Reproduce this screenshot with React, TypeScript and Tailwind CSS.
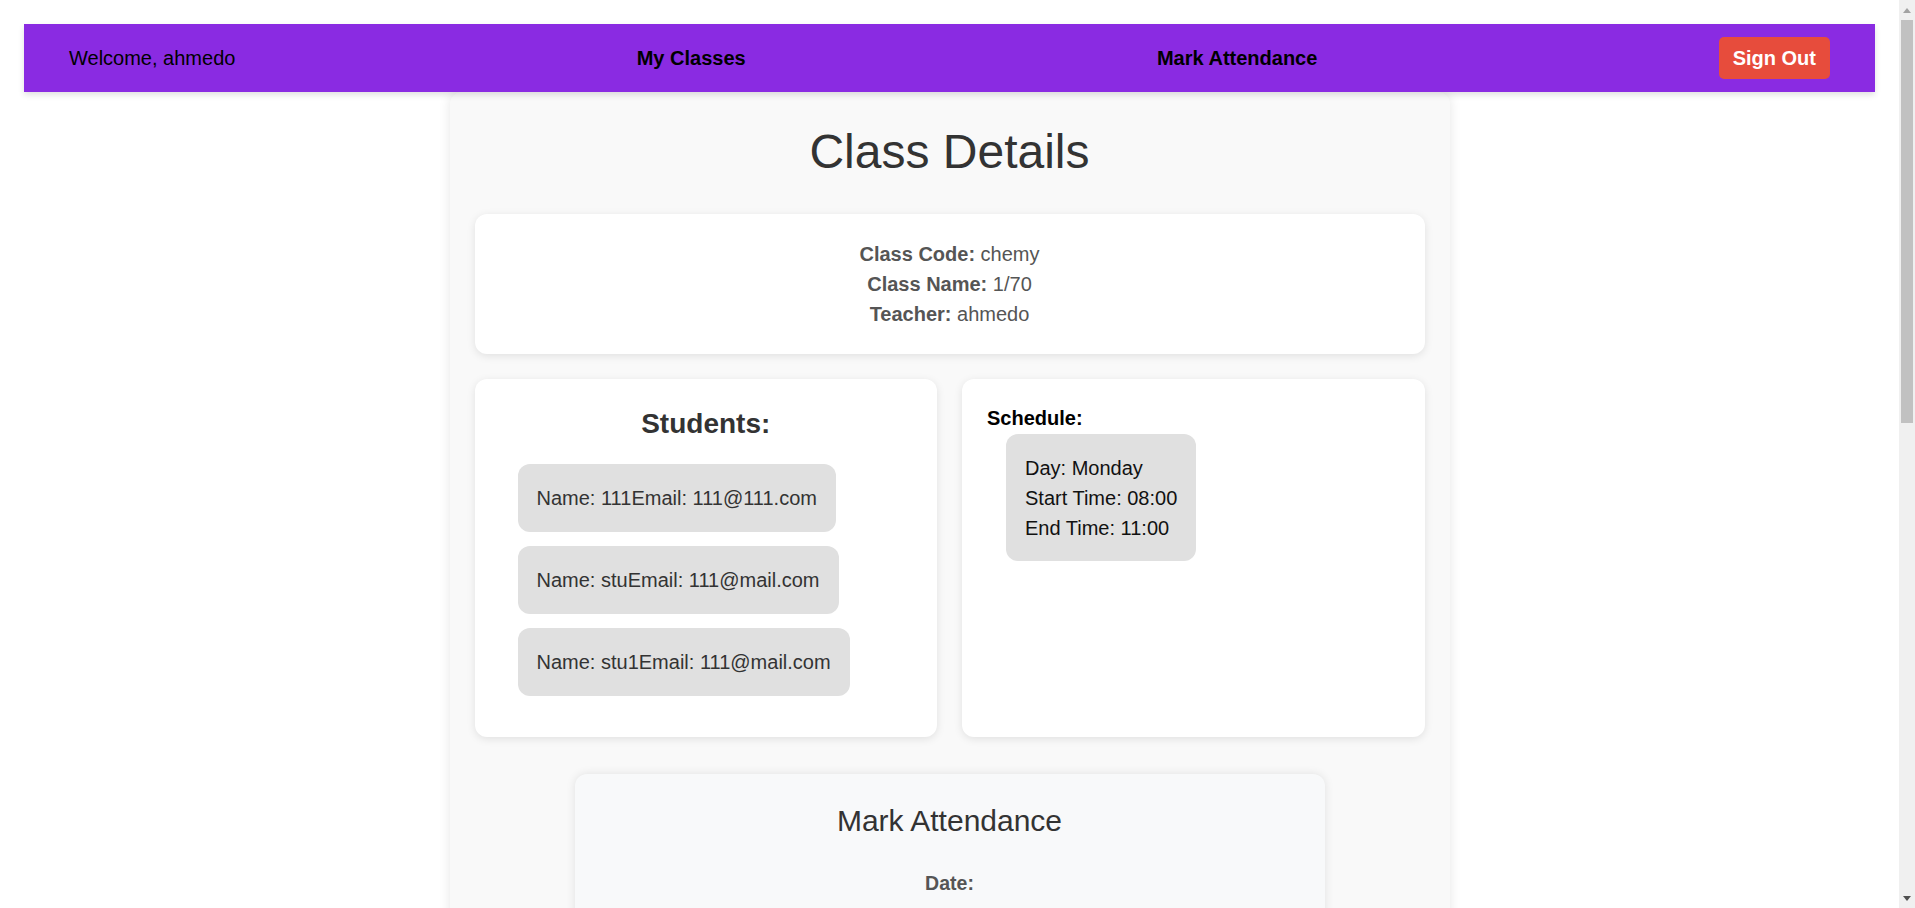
import React from "react";

const students = [
  { name: "111", email: "111@111.com" },
  { name: "stu", email: "111@mail.com" },
  { name: "stu1", email: "111@mail.com" },
];

export default function App() {
  return (
    <div className="flex h-screen overflow-hidden bg-white font-['Liberation_Sans',Arial,sans-serif]">
      <div className="flex-1 overflow-y-auto px-[24px] pt-[24px] pb-[24px] [scrollbar-width:none]">
        {/* Navbar */}
        <nav className="relative z-10 flex h-[68px] items-center justify-between bg-[#8a2be2] px-[45px] text-[20px] text-black shadow-[0_3px_6px_rgba(0,0,0,0.12)]">
          <span>Welcome, ahmedo</span>
          <a href="#" className="mr-[10px] font-bold">My Classes</a>
          <a href="#" className="font-bold">Mark Attendance</a>
          <button className="rounded-[5px] bg-[#e74c3c] px-[14px] py-[10px] text-[20px] leading-[22px] font-bold text-white">
            Sign Out
          </button>
        </nav>

        {/* Class details container */}
        <main className="mx-auto max-w-[1000px] rounded-[12px] bg-[#f9f9f9] px-[25px] pb-[25px] shadow-[0_0_12px_rgba(0,0,0,0.1)]">
          <h1 className="pt-[32px] text-center text-[48px] leading-[55px] text-[#333]">Class Details</h1>

          <div className="mt-[35px] rounded-[12px] bg-white p-[25px] text-center text-[20px] leading-[30px] text-[#555] shadow-[0_2px_8px_rgba(0,0,0,0.1)]">
            <p><span className="font-bold">Class Code:</span> chemy</p>
            <p><span className="font-bold">Class Name:</span> 1/70</p>
            <p><span className="font-bold">Teacher:</span> ahmedo</p>
          </div>

          <div className="mt-[25px] grid grid-cols-2 gap-[25px]">
            {/* Students */}
            <div className="rounded-[12px] bg-white px-[25px] pt-[25px] pb-[41px] shadow-[0_2px_8px_rgba(0,0,0,0.1)]">
              <h3 className="mt-[4px] text-center text-[28px] leading-[32px] font-bold text-[#333]">Students:</h3>
              <ul className="mt-[24px] flex flex-col items-start gap-[14px] pl-[18px]">
                {students.map((s) => (
                  <li
                    key={s.name}
                    className="rounded-[12px] bg-[#e0e0e0] px-[19px] py-[19px] text-[20px] leading-[30px] text-[#333]"
                  >
                    Name: {s.name}Email: {s.email}
                  </li>
                ))}
              </ul>
            </div>

            {/* Schedule */}
            <div className="rounded-[12px] bg-white p-[25px] shadow-[0_2px_8px_rgba(0,0,0,0.1)]">
              <p className="mt-[3px] text-[20px] leading-[23px] font-bold text-black">Schedule:</p>
              <div className="mt-[4px] ml-[19px] w-fit rounded-[12px] bg-[#e0e0e0] px-[19px] py-[18.5px] text-[20px] leading-[30px] text-[#111]">
                <p>Day: Monday</p>
                <p>Start Time: 08:00</p>
                <p>End Time: 11:00</p>
              </div>
            </div>
          </div>

          {/* Mark attendance */}
          <section className="mx-auto mt-[37px] min-h-[1090px] w-[750px] rounded-[12px] bg-[#f8f9fa] px-[25px] pt-[30px] pb-[25px] text-center shadow-[0_0_10px_rgba(0,0,0,0.1)]">
            <h2 className="text-[30px] leading-[33px] text-[#333]">Mark Attendance</h2>
            <label className="mt-[35px] block text-[19.5px] leading-[23px] font-bold text-[#555]">Date:</label>
            <input
              type="date"
              className="mx-auto mt-[18px] block h-[45px] w-[300px] rounded-[6px] border border-[#ccc] bg-white px-[12px] text-[18px]"
            />
            <div className="mt-[30px] flex flex-col gap-[15px]">
              {students.map((s) => (
                <label
                  key={s.name}
                  className="flex items-center justify-between rounded-[10px] bg-white px-[20px] py-[15px] text-[19.5px] text-[#333] shadow-[0_1px_4px_rgba(0,0,0,0.08)]"
                >
                  <span>{s.name}</span>
                  <input type="checkbox" className="h-[20px] w-[20px]" />
                </label>
              ))}
            </div>
            <button className="mt-[30px] rounded-[6px] bg-[#8a2be2] px-[24px] py-[12px] text-[20px] font-bold text-white">
              Submit Attendance
            </button>
          </section>
        </main>
      </div>

      {/* Window scrollbar */}
      <aside className="flex w-[16px] shrink-0 flex-col bg-[#f0f0f0]">
        <div className="flex h-[17px] items-center justify-center pt-[3px]">
          <div className="h-0 w-0 border-x-[4.5px] border-b-[5px] border-x-transparent border-b-[#a3a3a3]" />
        </div>
        <div className="mx-[2px] mt-[3px] h-[403px] bg-[#c1c1c1]" />
        <div className="flex-1" />
        <div className="flex h-[17px] items-center justify-center pb-[2px]">
          <div className="h-0 w-0 border-x-[4.5px] border-t-[5px] border-x-transparent border-t-[#505050]" />
        </div>
      </aside>
    </div>
  );
}
